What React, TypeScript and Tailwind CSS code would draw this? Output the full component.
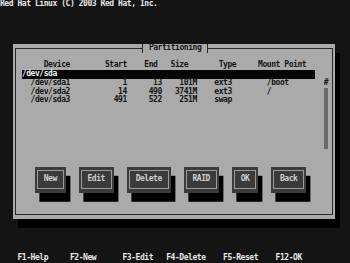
import React from "react";

const rows = [
  "  /dev/sda1            1      13    101M    ext3        /boot",
  "  /dev/sda2           14     490   3741M    ext3        /",
  "  /dev/sda3          491     522    251M    swap",
];

const header = "     Device        Start    End   Size       Type     Mount Point";

const buttons: { label: string; w: string }[] = [
  { label: "New", w: "w-[30.625px]" },
  { label: "Edit", w: "w-[35px]" },
  { label: "Delete", w: "w-[43.75px]" },
  { label: "RAID", w: "w-[35px]" },
  { label: "OK", w: "w-[26.25px]" },
  { label: "Back", w: "w-[35px]" },
];

function Btn({ label, w }: { label: string; w: string }) {
  return (
    <div
      className={`${w} h-[26.31px] bg-[#3b3b3b] px-[2px] pt-[3.5px] pb-[4px] shadow-[4.375px_8.77px_0_0_#000]`}
    >
      <div className="h-full border border-[#9a9a9a] flex items-center justify-center text-[#cfcfcf] leading-[8.77px]">
        {label}
      </div>
    </div>
  );
}

export default function App() {
  return (
    <div className="w-[350px] h-[263px] bg-[#141414] overflow-hidden flex flex-col font-['DejaVu_Sans_Mono',monospace] text-[8px] tracking-[-0.4418px] font-bold">
      <div className="h-[8.77px] leading-[8.77px] text-[#e8e8e8] whitespace-pre shrink-0">
        Red Hat Linux (C) 2003 Red Hat, Inc.
      </div>

      <div className="mt-[35.07px] ml-[13.125px] w-[322px] h-[175.4px] shrink-0 bg-[#aaaaaa] shadow-[5px_8.77px_0_0_#000] relative px-[2px] pt-[4px] pb-[4.4px]">
        <div className="h-full border border-[#2a2a2a] pl-[5.75px] pt-[12.54px] flex flex-col text-[#141414]">
          <div className="flex">
            <div className="w-[293.125px] flex flex-col">
              <div className="h-[8.77px] leading-[8.77px] whitespace-pre">{header}</div>
              <div className="h-[8.77px] leading-[8.77px] whitespace-pre bg-[#050505] text-[#f2f2f2]">/dev/sda</div>
              {rows.map((r) => (
                <div key={r} className="h-[8.77px] leading-[8.77px] whitespace-pre">
                  {r}
                </div>
              ))}
            </div>
            <div className="ml-[8.75px] w-[4.375px] flex flex-col pt-[17.54px]">
              <div className="h-[8.77px] leading-[8.77px]">#</div>
              <div className="h-[61.39px] w-[4px] bg-[#6b6b6b]" />
            </div>
          </div>
          <div className="ml-[13.125px] mt-[17.54px] flex gap-[13.125px]">
            {buttons.map((b) => (
              <Btn key={b.label} label={b.label} w={b.w} />
            ))}
          </div>
        </div>
        <div className="absolute left-[129px] top-0 h-[8.77px] w-[66px] bg-[#aaaaaa] border-l border-r border-[#2a2a2a] flex items-center justify-center leading-[8.77px] text-[#141414] whitespace-pre">
          Partitioning
        </div>
      </div>

      <div className="mt-auto h-[8.77px] leading-[8.77px] text-[#e8e8e8] whitespace-pre shrink-0">
        {"    F1-Help     F2-New      F3-Edit   F4-Delete    F5-Reset    F12-OK"}
      </div>
    </div>
  );
}
